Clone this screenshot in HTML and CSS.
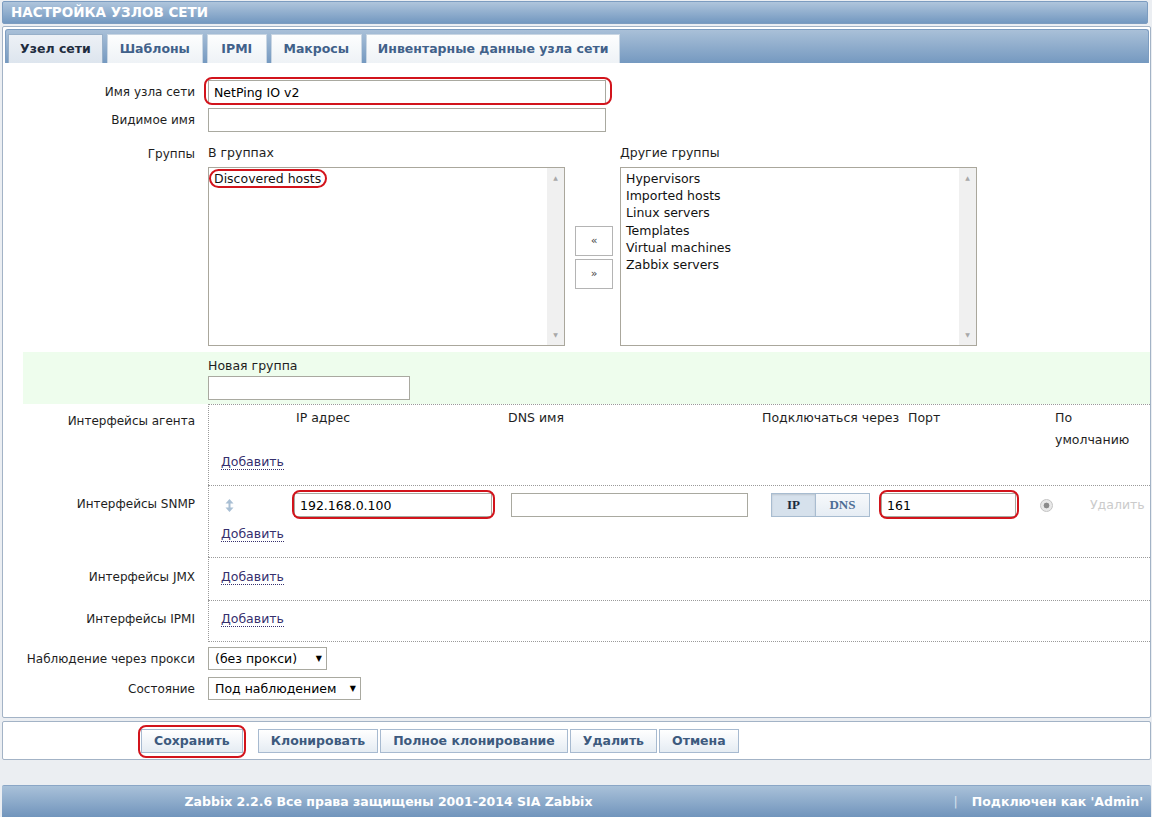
FILE: index.html
```html
<!DOCTYPE html>
<html lang="ru">
<head>
    <meta charset="UTF-8">
    <meta name="viewport" content="width=device-width, initial-scale=1.0">
    <title>Настройка узлов сети</title>
    <link rel="stylesheet" href="styles.css">
</head>
<body>
    <div class="header">НАСТРОЙКА УЗЛОВ СЕТИ</div>

    <div class="box">
        <div class="tabs">
            <span class="tab active">Узел сети</span>
            <span class="tab">Шаблоны</span>
            <span class="tab">IPMI</span>
            <span class="tab">Макросы</span>
            <span class="tab">Инвентарные данные узла сети</span>
        </div>

        <div class="form">
            <div class="row">
                <div class="lbl">Имя узла сети</div>
                <div class="val"><span class="mark mark-name"><input class="txt w-name" type="text" value="NetPing IO v2"></span></div>
            </div>
            <div class="row">
                <div class="lbl">Видимое имя</div>
                <div class="val"><input class="txt w-name" type="text" value=""></div>
            </div>

            <div class="row row-groups">
                <div class="lbl">Группы</div>
                <div class="val groups">
                    <div class="gcol">
                        <div class="gtitle">В группах</div>
                        <div class="listbox">
                            <div class="items"><span class="mark mark-pill">Discovered hosts</span></div>
                            <div class="scroll"><span>▲</span><span>▼</span></div>
                        </div>
                    </div>
                    <div class="move">
                        <span class="mbtn">«</span>
                        <span class="mbtn">»</span>
                    </div>
                    <div class="gcol">
                        <div class="gtitle">Другие группы</div>
                        <div class="listbox">
                            <div class="items">
                                <div>Hypervisors</div>
                                <div>Imported hosts</div>
                                <div>Linux servers</div>
                                <div>Templates</div>
                                <div>Virtual machines</div>
                                <div>Zabbix servers</div>
                            </div>
                            <div class="scroll"><span>▲</span><span>▼</span></div>
                        </div>
                    </div>
                </div>
            </div>

            <div class="row row-new">
                <div class="lbl"></div>
                <div class="val">
                    <div>Новая группа</div>
                    <input class="txt w-group" type="text" value="">
                </div>
            </div>

            <div class="row row-if if-agent">
                <div class="lbl">Интерфейсы агента</div>
                <div class="val">
                    <div class="if-head">
                        <span></span>
                        <span>IP адрес</span>
                        <span>DNS имя</span>
                        <span>Подключаться через</span>
                        <span>Порт</span>
                        <span>По умолчанию</span>
                    </div>
                    <a class="add">Добавить</a>
                </div>
            </div>

            <div class="row row-if if-snmp">
                <div class="lbl">Интерфейсы SNMP</div>
                <div class="val">
                    <div class="if-line">
                        <span class="drag">
                            <svg width="9" height="13" viewBox="0 0 9 13"><path d="M4.5 0 L8.5 4.5 H0.5 Z M3.5 4.5 H5.5 V8.5 H3.5 Z M0.5 8.5 H8.5 L4.5 13 Z" fill="#a9bfd4"/></svg>
                        </span>
                        <span><span class="mark mark-ip"><input class="txt w-ip" type="text" value="192.168.0.100"></span></span>
                        <span><input class="txt w-dns" type="text" value=""></span>
                        <span class="toggle"><span class="on">IP</span><span>DNS</span></span>
                        <span><span class="mark mark-ip"><input class="txt w-port" type="text" value="161"></span></span>
                        <span class="radio"></span>
                        <span class="remove">Удалить</span>
                    </div>
                    <a class="add">Добавить</a>
                </div>
            </div>

            <div class="row row-if if-jmx">
                <div class="lbl">Интерфейсы JMX</div>
                <div class="val"><a class="add">Добавить</a></div>
            </div>

            <div class="row row-if if-ipmi">
                <div class="lbl">Интерфейсы IPMI</div>
                <div class="val"><a class="add">Добавить</a></div>
            </div>

            <div class="row row-select first">
                <div class="lbl">Наблюдение через прокси</div>
                <div class="val"><span class="select w-proxy">(без прокси)<i>▼</i></span></div>
            </div>
            <div class="row row-select">
                <div class="lbl">Состояние</div>
                <div class="val"><span class="select w-state">Под наблюдением<i>▼</i></span></div>
            </div>
        </div>
    </div>

    <div class="buttons">
        <span class="mark mark-btn"><span class="btn">Сохранить</span></span>
        <div class="btn-group">
            <span class="btn">Клонировать</span>
            <span class="btn">Полное клонирование</span>
            <span class="btn">Удалить</span>
            <span class="btn">Отмена</span>
        </div>
    </div>

    <div class="footer">
        <div class="copy">Zabbix 2.2.6 Все права защищены 2001-2014 SIA Zabbix</div>
        <div class="user"><span class="sep">|</span>Подключен как 'Admin'</div>
    </div>
</body>
</html>
```

FILE: styles.css
```css
body {
    margin: 0;
    padding: 0 1px 0 2px;
    background: #ebeef2;
    font-family: "DejaVu Sans", Verdana, sans-serif;
    font-size: 12.5px;
    line-height: 16px;
    color: #1e1e1e;
}
.header {
    margin: 1px 3px 0 0;
    height: 21px;
    line-height: 21px;
    padding-left: 8px;
    border: 1px solid #7c9cc0;
    border-radius: 2px;
    background: linear-gradient(#afc5dc, #7398c0);
    color: #fff;
    font-weight: bold;
    font-size: 13.5px;
}
.box {
    margin-top: 2px;
    border: 1px solid #a3b3c6;
    border-radius: 2px;
    background: #fff;
    padding-bottom: 13px;
}
.tabs {
    display: flex;
    align-items: flex-end;
    height: 34px;
    box-sizing: border-box;
    margin: 2px 1px 0 2px;
    padding: 0 0 0 2px;
    border: 1px solid #7c9cc0;
    border-bottom: none;
    border-radius: 3px 3px 0 0;
    background: linear-gradient(#a9c0d8, #7599c0);
}
.tab {
    height: 29px;
    box-sizing: border-box;
    line-height: 28px;
    padding: 0 11px;
    margin-right: 4px;
    border: 1px solid #c9d6e3;
    border-bottom: none;
    background: linear-gradient(#fdfefe, #eef2f6);
    color: #41618a;
    font-weight: bold;
    text-align: center;
}
.tab:nth-child(2) { width: 96px; padding: 0; }
.tab:nth-child(3) { width: 60px; padding: 0; }
.tab:nth-child(4) { width: 91px; padding: 0; }
.tab.active {
    border-color: #98b0c9;
    background: linear-gradient(#edf1f6, #dde5ee);
    color: #1f2d3f;
}

/* form */
.form {
    margin-left: 20px;
    padding-top: 15px;
}
.row {
    display: flex;
    align-items: center;
    padding: 2px 0;
}
.lbl {
    width: 185px;
    flex: none;
    box-sizing: border-box;
    padding-right: 13px;
    text-align: right;
    white-space: nowrap;
    font-size: 12px;
}
.val {
    flex: 1;
}
.txt {
    display: block;
    height: 24px;
    box-sizing: border-box;
    margin: 0;
    padding: 0 5px;
    border: 1px solid #a9a9a0;
    font: inherit;
    color: #000;
    outline: none;
}
.w-name { width: 398px; }
.w-group { width: 202px; }
.w-ip { width: 198px; }
.w-dns { width: 237px; }
.w-port { width: 135px; }

/* red annotation frames */
.mark {
    position: relative;
    display: inline-block;
}
.mark::after {
    content: "";
    position: absolute;
    border: 2px solid #d2141c;
    border-radius: 8px;
}
.mark-name::after { top: -3px; bottom: -1px; left: -4px; right: -6px; }
.mark-pill::after { top: -1px; bottom: -1px; left: -5px; right: -6px; border-radius: 10px; }
.mark-ip::after { top: -3px; bottom: -2px; left: -2px; right: -3px; }
.mark-btn::after { top: -4px; bottom: -5px; left: -3px; right: -3px; }

/* groups */
.row-groups {
    align-items: flex-start;
    padding: 11px 0 6px;
}
.row-groups .lbl {
    padding-top: 1px;
}
.groups {
    display: flex;
}
.gtitle {
    margin-bottom: 6px;
}
.listbox {
    display: flex;
    width: 357px;
    height: 179px;
    box-sizing: border-box;
    border: 1px solid #aaa79c;
}
.items {
    flex: 1;
    padding: 2px 5px;
    line-height: 17.2px;
    color: #111;
}
.scroll {
    width: 17px;
    background: #f0f0f0;
    display: flex;
    flex-direction: column;
    justify-content: space-between;
    align-items: center;
    padding: 6px 0;
    font-size: 6px;
    line-height: 8px;
    color: #a8a8a8;
}
.move {
    display: flex;
    flex-direction: column;
    gap: 3px;
    margin: 81px 7px 0 10px;
}
.mbtn {
    width: 38px;
    height: 30px;
    box-sizing: border-box;
    border: 1px solid #b4b4b4;
    text-align: center;
    line-height: 28px;
    font-size: 11px;
    color: #444;
}

.row-new {
    background: #eefded;
    padding: 6px 0 4px;
}
.row-new .txt {
    margin-top: 2px;
}

/* interfaces */
.row-if {
    align-items: flex-start;
    padding: 0;
}
.row-if .val {
    border-left: 1px dotted #9a9a9a;
    border-top: 1px dotted #9a9a9a;
}
.if-ipmi .val {
    border-bottom: 1px dotted #9a9a9a;
}
.add {
    display: inline-block;
    margin-left: 12px;
    color: #36306e;
    line-height: 15px;
    border-bottom: 1px dotted #36306e;
}
.if-agent .lbl { padding-top: 9px; }
.if-agent .val { padding: 2px 0 15px; }
.if-agent .add { margin-top: 3px; }
.if-head {
    display: grid;
    grid-template-columns: 87px 212px 254px 146px 147px 80px;
    line-height: 22px;
}
.if-snmp .lbl { padding-top: 11px; }
.if-snmp .val { padding: 7px 0 15px; }
.if-snmp .add { margin-top: 9px; }
.if-line {
    display: grid;
    grid-template-columns: 85px 217px 260px 110px 159px 50px auto;
    align-items: center;
    height: 24px;
}
.drag {
    padding-left: 16px;
    height: 13px;
}
.drag svg {
    display: block;
}
.toggle {
    display: flex;
    width: 99px;
    height: 24px;
    box-sizing: border-box;
    border: 1px solid #a8bcd0;
    font-family: "Liberation Serif", "Times New Roman", serif;
    font-weight: bold;
    font-size: 13px;
    line-height: 22px;
}
.toggle span {
    flex: 1;
    text-align: center;
    color: #4d6d95;
    background: linear-gradient(#f7f9fb, #e6edf4);
}
.toggle .on {
    flex: none;
    width: 43px;
    border-right: 1px solid #a8bcd0;
    color: #1b2a3e;
    background: #d6e1ec;
    box-shadow: inset 0 1px 2px rgba(0, 0, 0, 0.12);
}
.radio {
    width: 13px;
    height: 13px;
    box-sizing: border-box;
    border: 1px solid #c3c3c3;
    border-radius: 50%;
    background: radial-gradient(circle, #8a8a8a 0 2.6px, #e8e8e8 3.2px);
}
.remove {
    color: #cbcbcb;
}
.if-jmx .lbl { padding-top: 12px; }
.if-jmx .val { padding: 11px 0 15px; }
.if-ipmi .lbl { padding-top: 11px; }
.if-ipmi .val { padding: 10px 0 14px; }

.row-select {
    padding: 3px 0 4px;
}
.row-select.first {
    padding-top: 5px;
}
.select {
    position: relative;
    display: block;
    height: 23px;
    box-sizing: border-box;
    border: 1px solid #a9a9a0;
    padding-left: 6px;
    line-height: 21px;
    color: #000;
}
.select i {
    position: absolute;
    right: 4px;
    top: 0;
    font-style: normal;
    font-size: 8px;
}
.w-proxy { width: 119px; }
.w-state { width: 153px; }

/* bottom buttons */
.buttons {
    display: flex;
    margin-top: 3px;
    padding: 7px 0 6px 138px;
    border: 1px solid #a3b3c6;
    border-radius: 2px;
    background: #fff;
}
.btn-group {
    display: flex;
    gap: 2px;
    margin-left: 15px;
}
.btn {
    display: block;
    height: 24px;
    box-sizing: border-box;
    padding: 0 12px;
    border: 1px solid #a7bad0;
    background: linear-gradient(#ffffff, #e5ecf3);
    color: #3d5a7e;
    font-weight: bold;
    line-height: 22px;
}

.footer {
    display: grid;
    grid-template-columns: 773px 1fr;
    margin-top: 25px;
    height: 32px;
    line-height: 32px;
    border-top: 1px solid #8aa6c6;
    border-radius: 2px 2px 0 0;
    background: linear-gradient(#a9c1d9, #6f93bb);
    color: #fff;
    font-weight: bold;
}
.copy {
    text-align: center;
}
.user {
    text-align: right;
    padding-right: 8px;
}
.sep {
    color: #d5e0ec;
    font-weight: normal;
    margin-right: 14px;
}
```
